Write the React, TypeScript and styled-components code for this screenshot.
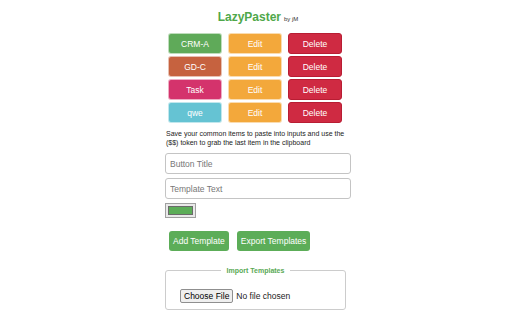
import React from "react";
import styled, { createGlobalStyle } from "styled-components";

const GlobalStyle = createGlobalStyle`
  html, body {
    margin: 0;
    padding: 0;
    background: #ffffff;
    font-family: "Liberation Sans", Arial, sans-serif;
  }
`;

const templates = [
  { title: "CRM-A", color: "#5faa59" },
  { title: "GD-C", color: "#c6623f" },
  { title: "Task", color: "#d4336c" },
  { title: "qwe", color: "#65c3d3" },
];

const App: React.FunctionComponent = () => {
  return (
    <>
      <GlobalStyle />
      <Container>
        <Header>
          <Title>LazyPaster</Title>
          <Byline>by jM</Byline>
        </Header>

        <Grid>
          {templates.map((item) => (
            <React.Fragment key={item.title}>
              <Button color={item.color}>{item.title}</Button>
              <Button color="#f3a83b">Edit</Button>
              <Button color="#cf2a42" $border="#b81d33">
                Delete
              </Button>
            </React.Fragment>
          ))}
        </Grid>

        <Description>
          Save your common items to paste into inputs and use the ($$) token to
          grab the last item in the clipboard
        </Description>

        <TextInput placeholder="Button Title" />
        <TextInput placeholder="Template Text" />

        <ColorInput type="color" defaultValue="#5cad58" />

        <Actions>
          <ActionButton>Add Template</ActionButton>
          <ActionButton>Export Templates</ActionButton>
        </Actions>

        <ImportBox>
          <Legend>Import Templates</Legend>
          <FileInput type="file" />
        </ImportBox>
      </Container>
    </>
  );
};

export default App;

const Container = styled.div`
  width: 186px;
  margin-left: calc(50% - 91px);
  padding-top: 10px;
  display: flex;
  flex-direction: column;
`;

const Header = styled.div`
  display: flex;
  align-items: baseline;
  justify-content: center;
  gap: 3px;
`;

const Title = styled.h1`
  margin: 0;
  font-size: 12px;
  font-weight: bold;
  color: #4fa84a;
`;

const Byline = styled.span`
  font-size: 6px;
  color: #333;
`;

const Grid = styled.div`
  display: grid;
  grid-template-columns: repeat(3, 54px);
  column-gap: 6px;
  row-gap: 2px;
  margin-top: 9px;
  padding-left: 3px;
`;

const Button = styled.div<{ color: string; $border?: string }>`
  height: 21px;
  box-sizing: border-box;
  background-color: ${(p) => p.color};
  border: 1px solid ${(p) => p.$border || "rgba(255,255,255,0.6)"};
  border-radius: 3px;
  color: #ffffff;
  font-size: 8.5px;
  display: flex;
  align-items: center;
  justify-content: center;
`;

const Description = styled.p`
  margin: 6px 0 0 1px;
  font-size: 7px;
  line-height: 9px;
  color: #222;
  width: 184px;
`;

const TextInput = styled.input`
  box-sizing: border-box;
  width: 186px;
  height: 21px;
  margin-top: 4px;
  padding: 0 4px;
  border: 1px solid #c4c4c4;
  border-radius: 3px;
  font-family: "Liberation Sans", Arial, sans-serif;
  font-size: 8.5px;
  outline: none;

  &:first-of-type {
    margin-top: 6px;
  }

  &::placeholder {
    color: #777;
  }
`;

const ColorInput = styled.input`
  box-sizing: border-box;
  width: 31px;
  height: 15px;
  margin: 4px 0 0 0;
  padding: 2px;
  border: 1px solid #a0a0a0;
  background: #e9e9e9;
  cursor: pointer;
  -webkit-appearance: none;
  appearance: none;

  &::-webkit-color-swatch-wrapper {
    padding: 0;
  }

  &::-webkit-color-swatch {
    border: 1px solid #6a6a6a;
    border-radius: 0;
  }
`;

const Actions = styled.div`
  display: flex;
  gap: 8px;
  margin-top: 13px;
  padding-left: 4px;
`;

const ActionButton = styled.button`
  height: 20px;
  padding: 0 4px;
  border: none;
  border-radius: 3px;
  background-color: #5cad58;
  color: #ffffff;
  font-family: "Liberation Sans", Arial, sans-serif;
  font-size: 8.5px;
`;

const ImportBox = styled.fieldset`
  box-sizing: border-box;
  width: 181px;
  min-width: 0;
  height: 43px;
  margin: 16px 0 0 0;
  padding: 8px 14px 0;
  border: 1px solid #cccccc;
  border-radius: 3px;
`;

const Legend = styled.legend`
  margin: 0 auto;
  padding: 0 6px;
  font-size: 7px;
  font-weight: bold;
  color: #5aa954;
`;

const FileInput = styled.input`
  width: 150px;
  font-family: "Liberation Sans", Arial, sans-serif;
  font-size: 8.5px;
  color: #222;
  margin-top: 7px;

  &::file-selector-button {
    font-family: "Liberation Sans", Arial, sans-serif;
    font-size: 8.5px;
    padding: 1px 3px;
    margin-right: 3px;
    border: 1px solid #8f8f8f;
    border-radius: 2px;
    background: #efefef;
  }
`;
